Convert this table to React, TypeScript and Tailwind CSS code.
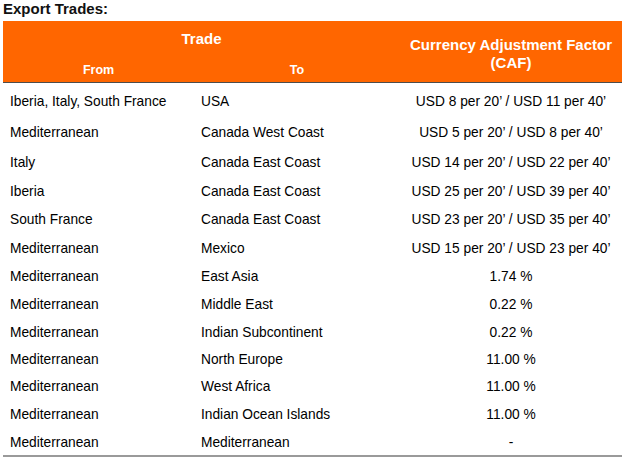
import React from "react";

type Row = { from: string; to: string; caf: string; h: string };

// heights follow the screenshot, rows are a little uneven
const rows: Row[] = [
  { from: "Iberia, Italy, South France", to: "USA", caf: "USD 8 per 20’ / USD 11 per 40’", h: "h-[33px]" },
  { from: "Mediterranean", to: "Canada West Coast", caf: "USD 5 per 20’ / USD 8 per 40’", h: "h-[30px]" },
  { from: "Italy", to: "Canada East Coast", caf: "USD 14 per 20’ / USD 22 per 40’", h: "h-[29px]" },
  { from: "Iberia", to: "Canada East Coast", caf: "USD 25 per 20’ / USD 39 per 40’", h: "h-[29px]" },
  { from: "South France", to: "Canada East Coast", caf: "USD 23 per 20’ / USD 35 per 40’", h: "h-[28px]" },
  { from: "Mediterranean", to: "Mexico", caf: "USD 15 per 20’ / USD 23 per 40’", h: "h-[29px]" },
  { from: "Mediterranean", to: "East Asia", caf: "1.74 %", h: "h-[28px]" },
  { from: "Mediterranean", to: "Middle East", caf: "0.22 %", h: "h-[28px]" },
  { from: "Mediterranean", to: "Indian Subcontinent", caf: "0.22 %", h: "h-[27px]" },
  { from: "Mediterranean", to: "North Europe", caf: "11.00 %", h: "h-[27px]" },
  { from: "Mediterranean", to: "West Africa", caf: "11.00 %", h: "h-[28px]" },
  { from: "Mediterranean", to: "Indian Ocean Islands", caf: "11.00 %", h: "h-[28px]" },
  { from: "Mediterranean", to: "Mediterranean", caf: "-", h: "h-[28px]" },
];

export default function App() {
  return (
    <div className="w-[627px] h-[459px] bg-white overflow-hidden font-['Liberation_Sans',Arial,sans-serif] text-black">
      <h1 className="pl-[3px] text-[15px] leading-[17px] font-bold text-[#111]">Export Trades:</h1>

      <div className="ml-[3px] mt-[4px] w-[619px] border-b-2 border-[#9a9a9a]">
        {/* header */}
        <div className="h-[62px] bg-[#ff6600] border-b border-[#4d4d4d] grid grid-cols-[397px_222px] text-white font-bold">
          <div className="flex flex-col">
            <div className="mt-[9px] h-[18px] leading-[18px] text-[15px] text-center">Trade</div>
            <div className="mt-[15px] grid grid-cols-[191px_206px] text-[12.5px] leading-[15px]">
              <div className="text-center">From</div>
              <div className="text-center">To</div>
            </div>
          </div>
          <div className="flex flex-col items-center justify-center pt-[4px] text-[15px] leading-[18px] text-center">
            <span>Currency Adjustment Factor</span>
            <span>(CAF)</span>
          </div>
        </div>

        {/* body */}
        {rows.map((r, i) => (
          <div key={i} className={`${r.h} pt-[4px] grid grid-cols-[191px_206px_222px] items-center text-[13.75px] leading-[16px]`}>
            <div className="pl-[7px] whitespace-nowrap">{r.from}</div>
            <div className="pl-[7px] whitespace-nowrap">{r.to}</div>
            <div className="text-center whitespace-nowrap">{r.caf}</div>
          </div>
        ))}
      </div>
    </div>
  );
}
